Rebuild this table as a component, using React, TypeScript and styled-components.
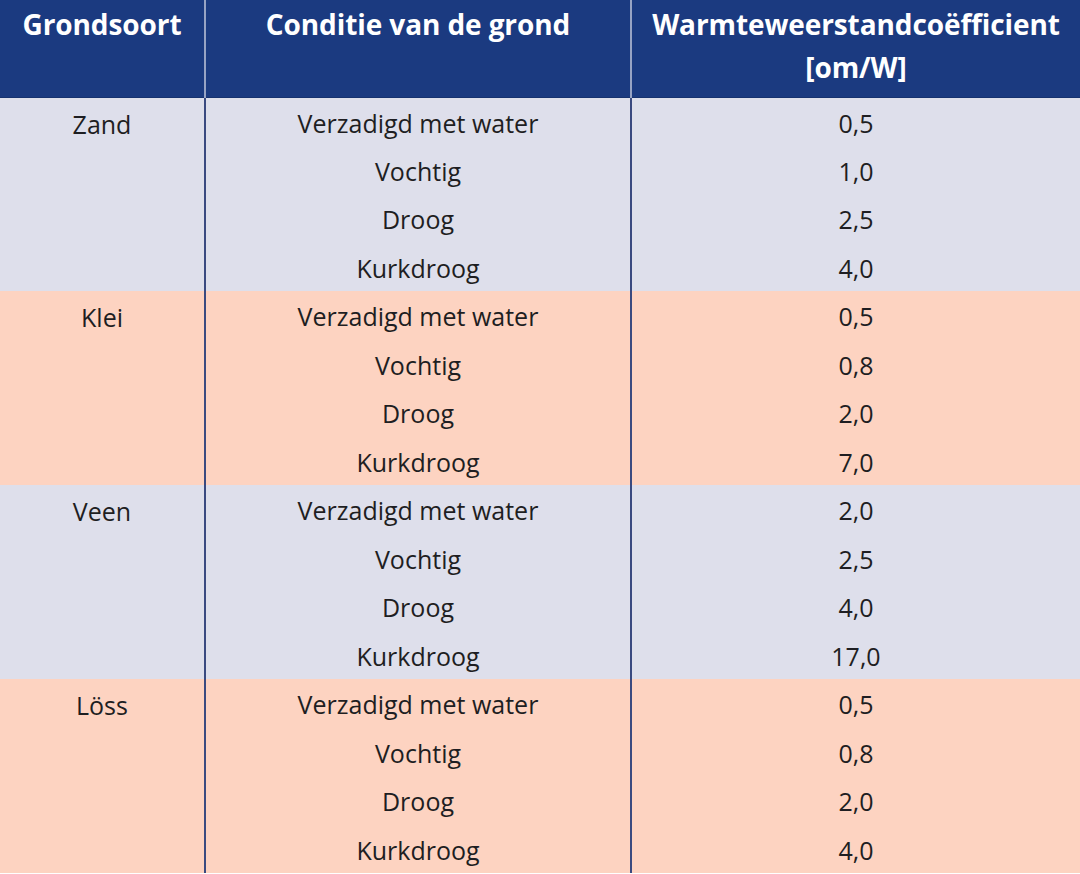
import React from "react";
import styled, { createGlobalStyle } from "styled-components";

const Global = createGlobalStyle`
  html, body { margin: 0; padding: 0; background: #ffffff; }
  body { font-family: "Open Sans", "Liberation Sans", sans-serif; }
`;

const Table = styled.table`
  width: 1080px;
  border-collapse: collapse;
  table-layout: fixed;
  font-family: "Open Sans", "Liberation Sans", sans-serif;
`;

const HeadCell = styled.th<{ $divider?: boolean }>`
  background: #1b3a80;
  color: #ffffff;
  font-weight: 700;
  font-size: 28px;
  line-height: 43px;
  height: 97px;
  padding: 3px 0 0 0;
  box-sizing: border-box;
  vertical-align: top;
  text-align: center;
  letter-spacing: -0.1px;
  border-left: ${(p) => (p.$divider ? "2px solid #97a3c4" : "none")};
  border-bottom: 1px solid #16326f;
`;

const Cell = styled.td<{ $bg: string; $divider?: boolean }>`
  background: ${(p) => p.$bg};
  color: #1e1e22;
  font-size: 25px;
  height: 48.5px;
  padding: 2px 0 0 0;
  box-sizing: border-box;
  text-align: center;
  vertical-align: middle;
  border-left: ${(p) => (p.$divider ? "2px solid #3a4a80" : "none")};
`;

const GroupCell = styled(Cell)`
  vertical-align: top;
  padding-top: 9px;
`;

const groups = [
  { name: "Zand", values: ["0,5", "1,0", "2,5", "4,0"], bg: "#dedfeb" },
  { name: "Klei", values: ["0,5", "0,8", "2,0", "7,0"], bg: "#fdd3c1" },
  { name: "Veen", values: ["2,0", "2,5", "4,0", "17,0"], bg: "#dedfeb" },
  { name: "Löss", values: ["0,5", "0,8", "2,0", "4,0"], bg: "#fdd3c1" },
];

const conditions = ["Verzadigd met water", "Vochtig", "Droog", "Kurkdroog"];

export default function App() {
  return (
    <>
      <Global />
      <Table>
        <colgroup>
          <col style={{ width: 205 }} />
          <col style={{ width: 426 }} />
          <col style={{ width: 449 }} />
        </colgroup>
        <thead>
          <tr>
            <HeadCell>Grondsoort</HeadCell>
            <HeadCell $divider>Conditie van de grond</HeadCell>
            <HeadCell $divider>
              Warmteweerstandcoëfficient
              <br />
              [om/W]
            </HeadCell>
          </tr>
        </thead>
        <tbody>
          {groups.map((g) =>
            conditions.map((c, i) => (
              <tr key={g.name + c}>
                {i === 0 && (
                  <GroupCell $bg={g.bg} rowSpan={4}>
                    {g.name}
                  </GroupCell>
                )}
                <Cell $bg={g.bg} $divider>
                  {c}
                </Cell>
                <Cell $bg={g.bg} $divider>
                  {g.values[i]}
                </Cell>
              </tr>
            ))
          )}
        </tbody>
      </Table>
    </>
  );
}
